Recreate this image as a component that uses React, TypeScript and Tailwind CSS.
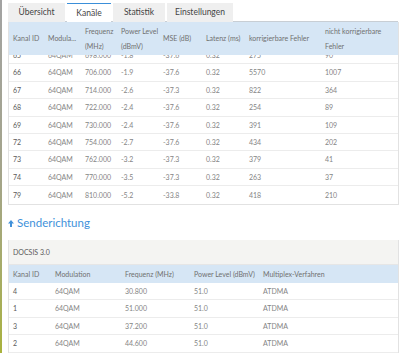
import React from "react";

const down = [
  ["65", "64QAM", "698.000", "-1.8", "-37.6", "0.32", "275", "90"],
  ["66", "64QAM", "706.000", "-1.9", "-37.6", "0.32", "5570", "1007"],
  ["67", "64QAM", "714.000", "-2.6", "-37.3", "0.32", "822", "364"],
  ["68", "64QAM", "722.000", "-2.4", "-37.6", "0.32", "254", "89"],
  ["69", "64QAM", "730.000", "-2.4", "-37.6", "0.32", "391", "109"],
  ["72", "64QAM", "754.000", "-2.7", "-37.6", "0.32", "434", "202"],
  ["73", "64QAM", "762.000", "-3.2", "-37.3", "0.32", "379", "41"],
  ["74", "64QAM", "770.000", "-3.5", "-37.3", "0.32", "263", "37"],
  ["79", "64QAM", "810.000", "-5.2", "-33.8", "0.32", "418", "210"],
];

const up = [
  ["4", "64QAM", "30.800", "51.0", "ATDMA"],
  ["1", "64QAM", "51.000", "51.0", "ATDMA"],
  ["3", "64QAM", "37.200", "51.0", "ATDMA"],
  ["2", "64QAM", "44.600", "51.0", "ATDMA"],
];

const downCols = "grid grid-cols-[35px_37px_36px_42px_43px_43px_76px_1fr]";
const upCols = "grid grid-cols-[42px_70px_69px_69px_1fr]";

function Tab({ label, active }: { label: string; active?: boolean }) {
  return (
    <div
      className={`h-[19px] flex items-center justify-center text-[8.5px] text-[#444] ${
        active ? "bg-white border-t border-[#3b8fd9]" : "bg-[#efefef]"
      }`}
    >
      {label}
    </div>
  );
}

export default function App() {
  return (
    <div
      className="w-[400px] h-[353px] overflow-hidden bg-white flex"
      style={{ fontFamily: "Lato, 'Open Sans', sans-serif" }}
    >
      {/* page edge */}
      <div className="w-[2px] shrink-0 bg-gradient-to-b from-[#a3a3a3] via-[#a4a48a] to-[#a9b23c]" />

      <div className="flex-1 pl-[6px] pr-[1px]">
        {/* Tabs */}
        <div className="pt-[3px] flex gap-[2px]">
          <div className="w-[57px]"><Tab label="Übersicht" /></div>
          <div className="w-[44px]"><Tab label="Kanäle" active /></div>
          <div className="w-[52px]"><Tab label="Statistik" /></div>
          <div className="w-[66px]"><Tab label="Einstellungen" /></div>
        </div>

        {/* Downstream table */}
        <div className="border-x border-b border-[#e2e2e2] text-[7px]">
          <div className={`${downCols} h-[33px] bg-[#d6e6f5] text-[#707070] items-center shadow-[0_-1px_0_#c8ced4]`}>
            <div className="pl-[4px]">Kanal ID</div>
            <div className="pl-[4px]">Modula...</div>
            <div className="pl-[4px] leading-[15px]">Frequenz<br />(MHz)</div>
            <div className="pl-[4px] leading-[15px]">Power Level<br />(dBmV)</div>
            <div className="pl-[4px]">MSE (dB)</div>
            <div className="pl-[4px]">Latenz (ms)</div>
            <div className="pl-[4px]">korrigierbare Fehler</div>
            <div className="pl-[4px] leading-[15px]">nicht korrigierbare<br />Fehler</div>
          </div>
          <div className="h-[149px] overflow-hidden">
            <div className="-mt-[8px]">
              {down.map((r, i) => (
                <div
                  key={r[0]}
                  className={`${downCols} h-[17.4px] items-center text-[#858585] ${
                    i < down.length - 1 ? "border-b border-[#ececec]" : ""
                  }`}
                >
                  {r.map((c, j) => (
                    <div key={j} className={`pl-[4px] ${j === 0 ? "text-[#5a5a5a]" : ""}`}>
                      {c}
                    </div>
                  ))}
                </div>
              ))}
            </div>
          </div>
        </div>

        {/* Upstream */}
        <div className="h-[35px] flex items-center gap-[3px] text-[#4191da]">
          <svg width="6" height="7" viewBox="0 0 6 7" className="mt-[1px]">
            <path d="M3 0 L6 3.5 H4 V7 H2 V3.5 H0 Z" fill="#4191da" />
          </svg>
          <span className="text-[11.5px]">Senderichtung</span>
        </div>

        <div className="border-x border-[#e2e2e2] text-[7px]">
          <div className="h-[25px] bg-[#f4f4f2] flex items-center pl-[4px] text-[#5a5a5a] border-b border-[#e6e6e6]">
            DOCSIS 3.0
          </div>
          <div className={`${upCols} h-[18px] bg-[#d6e6f5] text-[#707070] items-center`}>
            <div className="pl-[4px]">Kanal ID</div>
            <div className="pl-[4px]">Modulation</div>
            <div className="pl-[4px]">Frequenz (MHz)</div>
            <div className="pl-[4px]">Power Level (dBmV)</div>
            <div className="pl-[4px]">Multiplex-Verfahren</div>
          </div>
          {up.map((r) => (
            <div
              key={r[0]}
              className={`${upCols} h-[17.4px] items-center text-[#858585] border-b border-[#ececec]`}
            >
              {r.map((c, j) => (
                <div key={j} className={`pl-[4px] ${j === 0 ? "text-[#5a5a5a]" : ""}`}>
                  {c}
                </div>
              ))}
            </div>
          ))}
        </div>
      </div>
    </div>
  );
}
